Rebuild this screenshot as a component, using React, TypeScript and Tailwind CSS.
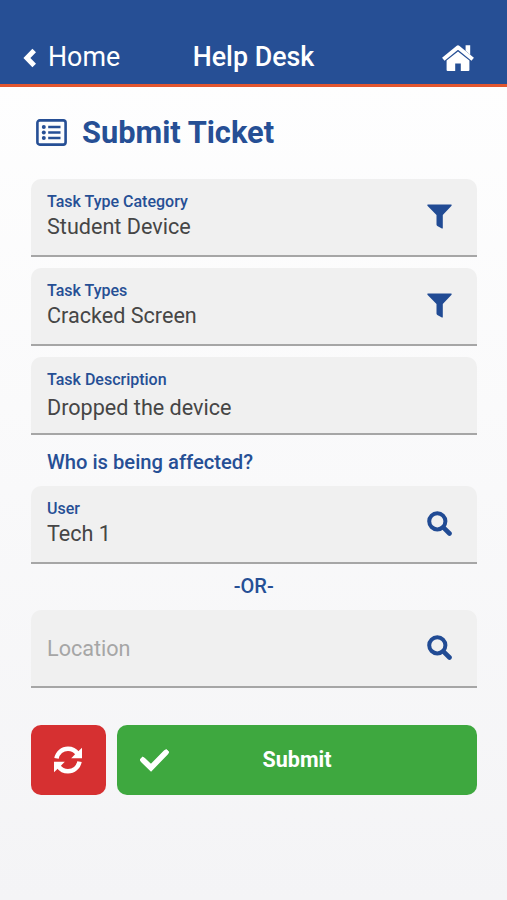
import type { ReactNode } from "react";

function ChevronIcon() {
  return (
    <svg width="14" height="20" viewBox="0 0 14 20" className="mt-[2px]" fill="none" stroke="currentColor" strokeWidth="5">
      <path d="M11.2 2.4 3.9 10l7.3 7.6" strokeLinejoin="miter" />
    </svg>
  );
}

function HomeIcon() {
  return (
    <svg width="34" height="28" viewBox="0 0 34 28" className="mt-[2px] mr-[10px] justify-self-end" fill="currentColor">
      <path d="M24.6 1.2h4.6v9.5l-4.6-4z" />
      <path d="M2.3 15.2 17 3.3l14.7 11.9" fill="none" stroke="currentColor" strokeWidth="3.9" strokeLinejoin="round" />
      <path d="M5.6 16.6 17 7.4l11.4 9.2V26a1 1 0 0 1-1 1h-7.6v-7.4h-5.6V27H6.6a1 1 0 0 1-1-1z" />
    </svg>
  );
}

function ListIcon() {
  return (
    <svg width="31" height="27" viewBox="0 0 31 27" className="-mt-px" fill="none" stroke="currentColor">
      <rect x="1.4" y="1.4" width="28.2" height="24.2" rx="2.4" strokeWidth="2.6" />
      <path d="M12.2 8h12.3M12.2 13.5h12.3M12.2 19h12.3" strokeWidth="2.3" />
      <g fill="currentColor" stroke="none">
        <circle cx="7.8" cy="8" r="2" />
        <circle cx="7.8" cy="13.5" r="2" />
        <circle cx="7.8" cy="19" r="2" />
      </g>
    </svg>
  );
}

function FilterIcon() {
  return (
    <svg width="25" height="25" viewBox="0 0 25 25" className="mb-[2px]" fill="currentColor">
      <path d="M.9.4h23.2q.8 0 .6.8-.1.5-.6 1L15.8 11v12.9q0 .9-.9.5l-4.6-2.5q-.8-.5-.8-1.3V11L.9 2.2Q.4 1.7.3 1.2.1.4.9.4z" />
    </svg>
  );
}

function SearchIcon() {
  return (
    <svg width="25" height="25" viewBox="0 0 25 25" className="mb-px" fill="none" stroke="currentColor">
      <circle cx="10.3" cy="10.3" r="8.1" strokeWidth="4" />
      <path d="m16.3 16.3 6.2 6.2" strokeWidth="4.6" strokeLinecap="round" />
    </svg>
  );
}

function RefreshIcon() {
  return (
    <svg width="28" height="28" viewBox="0 0 28 28" fill="none" stroke="currentColor">
      <path d="M2.5 12.4C3.6 6.6 8.3 2.7 14 2.7c3.800 0 7.300 1.800 9.500 4.900" strokeWidth="4.500" />
      <path d="M25.500 15.600C24.400 21.400 19.700 25.300 14 25.300c-3.800 0-7.300-1.800-9.500-4.900" strokeWidth="4.500" />
      <path d="M28 1.800v10.500H17.200l3.400-3.600z" fill="currentColor" stroke="none" />
      <path d="M0 26.200V15.700h10.800l-3.400 3.600z" fill="currentColor" stroke="none" />
    </svg>
  );
}

function CheckIcon() {
  return (
    <svg width="29" height="23" viewBox="0 0 29 23" fill="none" stroke="currentColor">
      <path d="m3.200 11.200 7.800 7.500L25.700 3.600" strokeWidth="5.600" strokeLinecap="round" />
      <path d="m2.700 10.700 8.300 8L26.200 3.100" strokeWidth="4.400" strokeLinecap="square" />
    </svg>
  );
}

type FieldProps = {
  label?: string;
  value?: string;
  placeholder?: string;
  roomy?: boolean;
  icon?: ReactNode;
};

function Field({ label, value, placeholder, roomy, icon }: FieldProps) {
  return (
    <div className="flex h-[78px] items-center justify-between rounded-t-[10px] border-b-2 border-[#a6a6a6] bg-[#f0f0f0] pr-[25.5px] pl-[16.5px]">
      {label ? (
        <div className={roomy ? "flex h-full flex-col gap-[6px] pt-[13px]" : "flex h-full flex-col gap-[3px] pt-[13px]"}>
          <span className="text-[16px] leading-5 font-medium text-[#264f95]">{label}</span>
          <span className="text-[21.6px] leading-6 text-[#464646]">{value}</span>
        </div>
      ) : (
        <span className="pt-[2px] text-[21.6px] leading-6 text-[#a6a6a6]">{placeholder}</span>
      )}
      <span className="text-[#214b94]">{icon}</span>
    </div>
  );
}

export default function App() {
  return (
    <div className="flex h-[900px] w-[507px] flex-col overflow-hidden bg-linear-to-b from-white to-[#f4f4f6] font-['Roboto',sans-serif]">
      <header className="grid h-[87px] shrink-0 grid-cols-[1fr_auto_1fr] items-center border-b-[3px] border-[#e2562f] bg-[#264f95] px-[22.5px] pt-[29px] text-white">
        <div className="flex items-center gap-[11.5px]">
          <ChevronIcon />
          <span className="text-[26.8px] leading-8">Home</span>
        </div>
        <h1 className="text-[26.8px] leading-8 font-medium">Help Desk</h1>
        <HomeIcon />
      </header>

      <main className="flex flex-col pr-[30px] pl-[30.5px]">
        <div className="mt-[28px] flex h-9 items-center gap-[15px] pl-[5.5px] text-[#264f95]">
          <ListIcon />
          <h2 className="text-[30.800px] leading-9 font-bold">Submit Ticket</h2>
        </div>

        <div className="mt-[28px] flex flex-col gap-[11px]">
          <Field label="Task Type Category" value="Student Device" icon={<FilterIcon />} />
          <Field label="Task Types" value="Cracked Screen" icon={<FilterIcon />} />
          <Field label="Task Description" value="Dropped the device" roomy />
        </div>

        <p className="mt-[15px] mb-[12px] pl-[16.5px] text-[20.200px] leading-6 font-medium text-[#264f95]">Who is being affected?</p>
        <Field label="User" value="Tech 1" icon={<SearchIcon />} />
        <p className="mt-[10px] mb-[12px] text-center text-[20px] leading-6 font-medium text-[#264f95]">-OR-</p>
        <Field placeholder="Location" icon={<SearchIcon />} />

        <div className="mt-[37px] flex h-[70px] gap-[11px] text-white">
          <button className="flex w-[75.5px] items-center justify-center rounded-[10px] bg-[#d63031]">
            <RefreshIcon />
          </button>
          <button className="grid flex-1 grid-cols-[1fr_auto_1fr] items-center rounded-[10px] bg-[#3ea83f] px-[23px]">
            <CheckIcon />
            <span className="text-[21.500px] leading-6 font-bold">Submit</span>
          </button>
        </div>
      </main>
    </div>
  );
}
